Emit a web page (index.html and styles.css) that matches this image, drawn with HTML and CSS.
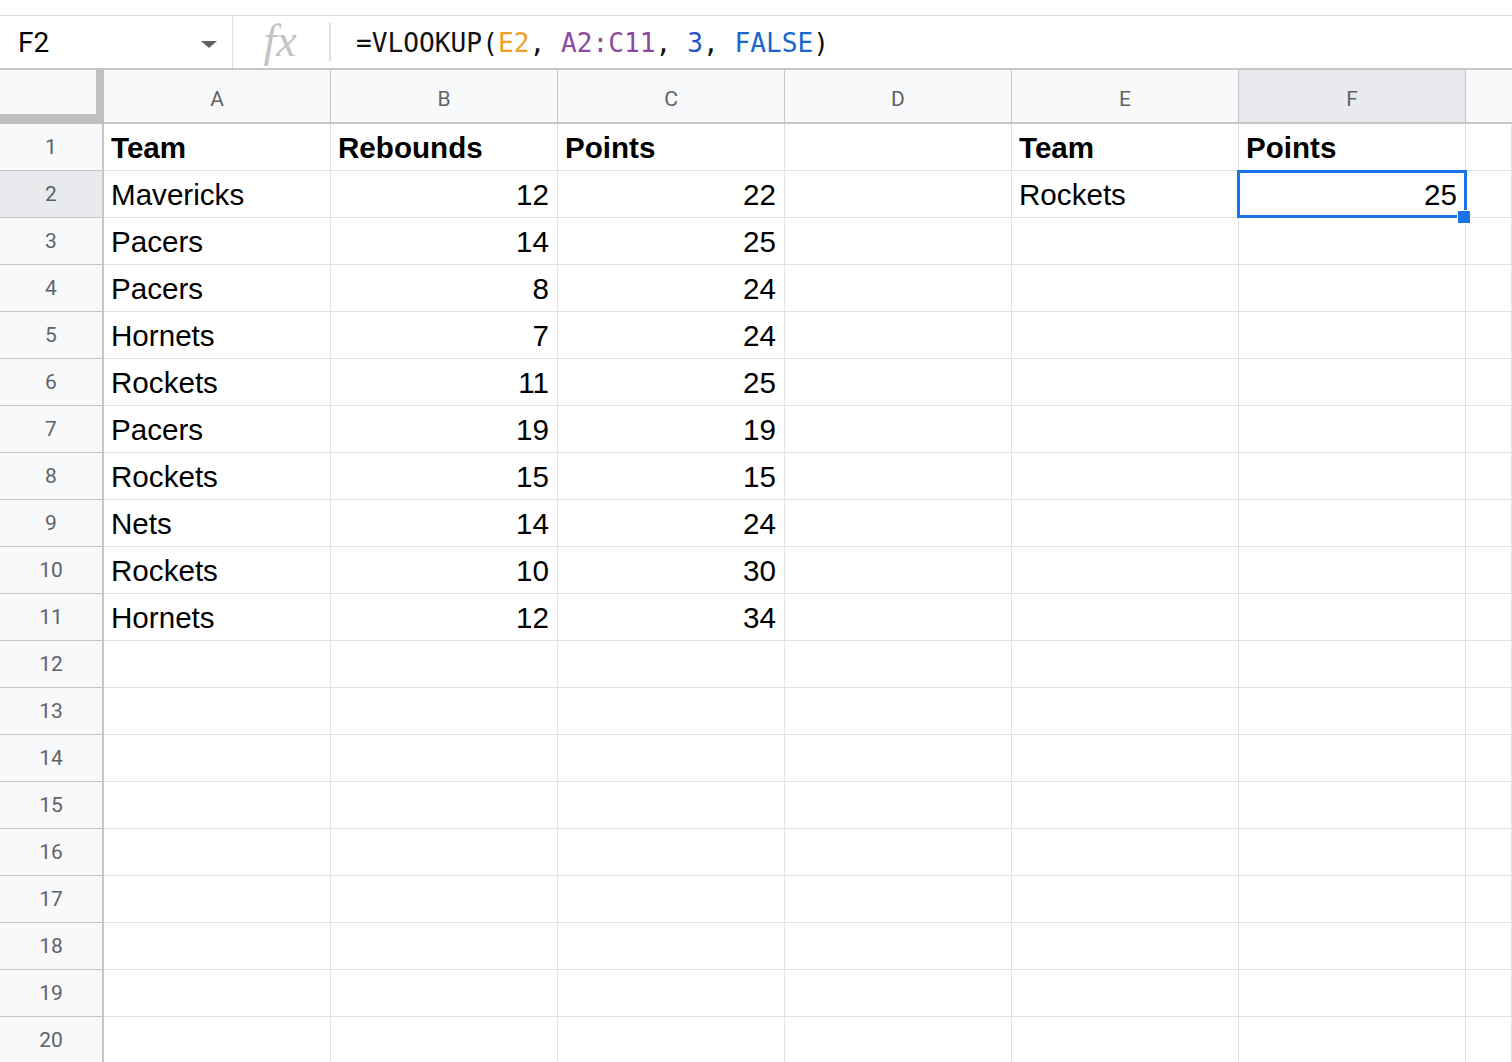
FILE: index.html
```html
<!DOCTYPE html>
<html>
<head>
<meta charset="utf-8">
<link rel="stylesheet" href="styles.css">
</head>
<body>
<div class="topgap"></div>
<div class="fbar">
  <div class="namebox"><span class="ref">F2</span><span class="caret"></span></div>
  <div class="fx"><span>fx</span></div>
  <div class="formula">=VLOOKUP(<span class="r1">E2</span>, <span class="r2">A2:C11</span>, <span class="n">3</span>, <span class="k">FALSE</span>)</div>
</div>
<div class="grid">
  <div class="corner"></div>
  <div class="ch">A</div><div class="ch">B</div><div class="ch">C</div><div class="ch">D</div><div class="ch">E</div><div class="ch sel">F</div><div class="ch last"></div>

  <div class="rh">1</div><div class="c b">Team</div><div class="c b">Rebounds</div><div class="c b">Points</div><div class="c"></div><div class="c b">Team</div><div class="c b">Points</div><div class="c"></div>
  <div class="rh sel">2</div><div class="c">Mavericks</div><div class="c num">12</div><div class="c num">22</div><div class="c"></div><div class="c">Rockets</div><div class="c num active">25<div class="selbox"></div><div class="handle"></div></div><div class="c"></div>
  <div class="rh">3</div><div class="c">Pacers</div><div class="c num">14</div><div class="c num">25</div><div class="c"></div><div class="c"></div><div class="c"></div><div class="c"></div>
  <div class="rh">4</div><div class="c">Pacers</div><div class="c num">8</div><div class="c num">24</div><div class="c"></div><div class="c"></div><div class="c"></div><div class="c"></div>
  <div class="rh">5</div><div class="c">Hornets</div><div class="c num">7</div><div class="c num">24</div><div class="c"></div><div class="c"></div><div class="c"></div><div class="c"></div>
  <div class="rh">6</div><div class="c">Rockets</div><div class="c num">11</div><div class="c num">25</div><div class="c"></div><div class="c"></div><div class="c"></div><div class="c"></div>
  <div class="rh">7</div><div class="c">Pacers</div><div class="c num">19</div><div class="c num">19</div><div class="c"></div><div class="c"></div><div class="c"></div><div class="c"></div>
  <div class="rh">8</div><div class="c">Rockets</div><div class="c num">15</div><div class="c num">15</div><div class="c"></div><div class="c"></div><div class="c"></div><div class="c"></div>
  <div class="rh">9</div><div class="c">Nets</div><div class="c num">14</div><div class="c num">24</div><div class="c"></div><div class="c"></div><div class="c"></div><div class="c"></div>
  <div class="rh">10</div><div class="c">Rockets</div><div class="c num">10</div><div class="c num">30</div><div class="c"></div><div class="c"></div><div class="c"></div><div class="c"></div>
  <div class="rh">11</div><div class="c">Hornets</div><div class="c num">12</div><div class="c num">34</div><div class="c"></div><div class="c"></div><div class="c"></div><div class="c"></div>
  <div class="rh">12</div><div class="c"></div><div class="c"></div><div class="c"></div><div class="c"></div><div class="c"></div><div class="c"></div><div class="c"></div>
  <div class="rh">13</div><div class="c"></div><div class="c"></div><div class="c"></div><div class="c"></div><div class="c"></div><div class="c"></div><div class="c"></div>
  <div class="rh">14</div><div class="c"></div><div class="c"></div><div class="c"></div><div class="c"></div><div class="c"></div><div class="c"></div><div class="c"></div>
  <div class="rh">15</div><div class="c"></div><div class="c"></div><div class="c"></div><div class="c"></div><div class="c"></div><div class="c"></div><div class="c"></div>
  <div class="rh">16</div><div class="c"></div><div class="c"></div><div class="c"></div><div class="c"></div><div class="c"></div><div class="c"></div><div class="c"></div>
  <div class="rh">17</div><div class="c"></div><div class="c"></div><div class="c"></div><div class="c"></div><div class="c"></div><div class="c"></div><div class="c"></div>
  <div class="rh">18</div><div class="c"></div><div class="c"></div><div class="c"></div><div class="c"></div><div class="c"></div><div class="c"></div><div class="c"></div>
  <div class="rh">19</div><div class="c"></div><div class="c"></div><div class="c"></div><div class="c"></div><div class="c"></div><div class="c"></div><div class="c"></div>
  <div class="rh">20</div><div class="c"></div><div class="c"></div><div class="c"></div><div class="c"></div><div class="c"></div><div class="c"></div><div class="c"></div>
</div>
</body>
</html>
```
FILE: styles.css
```css
* { box-sizing: border-box; }
html, body { margin: 0; padding: 0; background: #fff; }
body { width: 1512px; height: 1062px; overflow: hidden; font-family: "Liberation Sans", Arial, sans-serif; }

.topgap { height: 16px; border-bottom: 1px solid #dadce0; }

.fbar {
  display: flex;
  align-items: stretch;
  height: 54px;
  border-bottom: 2px solid #c4c7c5;
}
.namebox {
  width: 233px;
  display: flex;
  align-items: center;
  justify-content: space-between;
  padding: 0 15px 0 18px;
  border-right: 1px solid #e0e0e0;
}
.ref { font-family: Roboto, "Liberation Sans", sans-serif; font-size: 28px; color: #000; }
.caret {
  width: 0; height: 0;
  border-left: 8px solid transparent;
  border-right: 8px solid transparent;
  border-top: 7px solid #5f6368;
  margin-top: 4px;
}
.fx {
  width: 98px;
  display: flex;
  align-items: center;
  justify-content: center;
  padding: 7px 0;
}
.fx span {
  flex: 1;
  height: 100%;
  display: flex;
  align-items: center;
  justify-content: center;
  border-right: 2px solid #e0e0e0;
  font-family: "Liberation Serif", "Times New Roman", serif;
  font-style: italic;
  font-size: 46px;
  color: #c4c4c4;
  padding-right: 2px;
  padding-bottom: 4px;
}
.formula {
  display: flex;
  align-items: center;
  padding-left: 25px;
  padding-top: 2px;
  font-family: "DejaVu Sans Mono", "Liberation Mono", monospace;
  font-size: 26.2px;
  color: #111;
  white-space: pre;
}
.r1 { color: #f09d2b; }
.r2 { color: #8e4aa0; }
.n { color: #1f56c4; }
.k { color: #1a66cc; }

.grid {
  display: grid;
  grid-template-columns: 104px repeat(6, 227px) 1fr;
  grid-template-rows: 54px;
  grid-auto-rows: 47px;
}
.corner {
  background: #f8f9fa;
  border-right: 8px solid #c0c0c0;
  border-bottom: 10px solid #c0c0c0;
}
.ch {
  background: #f8f9fa;
  border-right: 1px solid #c4c7c5;
  border-bottom: 2px solid #c4c7c5;
  display: flex;
  align-items: center;
  justify-content: center;
  padding-top: 6px;
  font-family: Roboto, "Liberation Sans", sans-serif;
  font-size: 21px;
  color: #5f6368;
}
.ch.sel { background: #e8eaed; }
.ch.last { border-right: none; }
.rh {
  background: #f8f9fa;
  border-right: 2px solid #c4c7c5;
  border-bottom: 1px solid #c4c7c5;
  display: flex;
  align-items: center;
  justify-content: center;
  font-family: Roboto, "Liberation Sans", sans-serif;
  font-size: 21px;
  color: #5f6368;
}
.rh.sel { background: #e8eaed; }
.c {
  border-right: 1px solid #e2e3e3;
  border-bottom: 1px solid #e2e3e3;
  padding: 8px 8px 0 7px;
  font-size: 29.6px;
  line-height: 32px;
  color: #000;
  white-space: nowrap;
}
.c.b { font-weight: bold; }
.c.num { text-align: right; }
.c.active { position: relative; }
.selbox {
  position: absolute;
  left: -2px; top: -1px; right: -2px; bottom: -1px;
  border: 3px solid #1a73e8;
  pointer-events: none;
}
.handle {
  position: absolute;
  right: -6px; bottom: -7px;
  width: 14px; height: 14px;
  background: #1a73e8;
  border: 1px solid #fff;
}
```
